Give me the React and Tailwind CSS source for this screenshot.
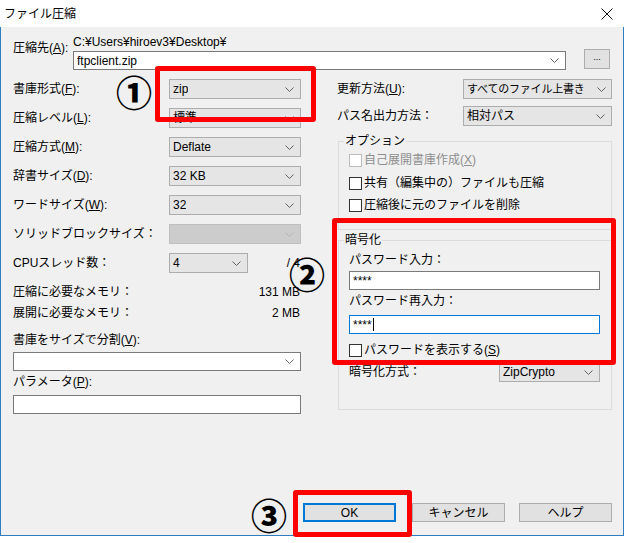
import React from 'react';

const M = ({ children }) => <span className="underline underline-offset-[1px]">{children}</span>;

const Chevron = ({ light }) => (
  <svg width="9" height="5" viewBox="0 0 9 5" className="shrink-0">
    <polyline points="0.5,0.5 4.5,4.5 8.5,0.5" fill="none" stroke={light ? '#b4b4b4' : '#606060'} strokeWidth="1" />
  </svg>
);

const tones = {
  gray: 'bg-[#e5e5e5] border-[#adadad]',
  white: 'bg-white border-[#7a7a7a]',
  off: 'bg-[#cccccc] border-[#bfbfbf]',
};

const Combo = ({ value, className = '', tone = 'gray', textClass = '' }) => (
  <div className={`flex items-center justify-between border pl-[3px] pr-[6px] ${tones[tone]} ${className}`}>
    <span className={`whitespace-nowrap overflow-hidden ${textClass}`}>{value}</span>
    <Chevron light={tone === 'off'} />
  </div>
);

const Check = ({ label, disabled, className = '' }) => (
  <div className={`flex items-center h-[14px] ${disabled ? 'text-[#8e8e8e]' : ''} ${className}`}>
    <span className={`w-[13px] h-[13px] border bg-white mr-[2px] shrink-0 ${disabled ? 'border-[#bcbcbc]' : 'border-[#333333]'}`} />
    <span>{label}</span>
  </div>
);

const Button = ({ children, primary, className = '' }) => (
  <div
    className={`w-[93px] h-[19px] flex items-center justify-center bg-[#e1e1e1] ${
      primary ? 'border-2 border-[#0078d7]' : 'border border-[#adadad]'
    } ${className}`}
  >
    {children}
  </div>
);

const leftRows = [
  { label: <>書庫形式(<M>F</M>):</>, value: 'zip' },
  { label: <>圧縮レベル(<M>L</M>):</>, value: '標準' },
  { label: <>圧縮方式(<M>M</M>):</>, value: 'Deflate' },
  { label: <>辞書サイズ(<M>D</M>):</>, value: '32 KB' },
  { label: <>ワードサイズ(<M>W</M>):</>, value: '32' },
  { label: 'ソリッドブロックサイズ：', value: '', tone: 'off' },
];

const GroupBox = ({ title, className = '', children }) => (
  <div className={`border border-[#dcdcdc] ml-[1px] pl-[10px] pr-[10px] ${className}`}>
    <div className="-mt-[8px] -ml-[5px] w-fit px-[1px] h-[14px] bg-[#f0f0f0]">{title}</div>
    {children}
  </div>
);

export default function App() {
  return (
    <div className="relative w-[626px] h-[543px] bg-white text-black text-[12px] leading-[14px] font-['Liberation_Sans','Noto_Sans_CJK_JP',sans-serif] overflow-hidden">
      <div className="flex flex-col w-[624px] h-[536px]">
        {/* title bar */}
        <div className="h-[27px] flex items-center justify-between pl-[4px] pr-[11px] bg-white shrink-0">
          <span>ファイル圧縮</span>
          <svg width="12" height="12" viewBox="0 0 12 12">
            <path d="M0.5 0.5 L11.5 11.5 M11.5 0.5 L0.5 11.5" stroke="#111" strokeWidth="1" />
          </svg>
        </div>

        <div className="flex-1 flex flex-col bg-[#f0f0f0] border-x border-b border-[#2f7dc1]">
          {/* destination */}
          <div className="flex items-start pl-[12px] pt-[8px]">
            <div className="w-[60px] mt-[6px] h-[14px]">
              圧縮先(<M>A</M>):
            </div>
            <div className="w-[493px]">
              <div className="h-[14px]">C:¥Users¥hiroev3¥Desktop¥</div>
              <Combo value="ftpclient.zip" tone="white" className="mt-[2px] h-[19px]" />
            </div>
            <div className="ml-[18px] mt-[14px] w-[26px] h-[20px] bg-[#e1e1e1] border border-[#adadad] flex items-center justify-center text-[9px] leading-none pb-[3px]">
              ...
            </div>
          </div>

          <div className="flex mt-[9px] pl-[12px]">
            {/* left column */}
            <div className="w-[288px]">
              {leftRows.map((r, i) => (
                <div key={i} className="flex items-center h-[20px] mb-[9px]">
                  <div className="w-[156px]">{r.label}</div>
                  <Combo value={r.value} tone={r.tone} className="w-[132px] h-full" />
                </div>
              ))}
              <div className="flex items-center h-[20px]">
                <div className="w-[156px]">CPUスレッド数：</div>
                <Combo value="4" className="w-[79px] h-full" />
                <div className="ml-auto pr-[1px]">/ 4</div>
              </div>
              <div className="flex items-center justify-between h-[20px] mt-[9px] pr-[1px]">
                <span>圧縮に必要なメモリ：</span>
                <span>131 MB</span>
              </div>
              <div className="flex items-center justify-between h-[20px] mt-[1px] pr-[1px]">
                <span>展開に必要なメモリ：</span>
                <span>2 MB</span>
              </div>
              <div className="mt-[10px] h-[14px]">
                書庫をサイズで分割(<M>V</M>):
              </div>
              <Combo value="" tone="white" className="mt-[5px] h-[19px]" />
              <div className="mt-[4px] h-[14px]">
                パラメータ(<M>P</M>):
              </div>
              <div className="mt-[6px] h-[19px] bg-white border border-[#7a7a7a]" />
            </div>

            {/* right column */}
            <div className="ml-[36px] w-[275px]">
              <div className="flex items-center h-[20px]">
                <div className="w-[126px]">
                  更新方法(<M>U</M>):
                </div>
                <Combo
                  value="すべてのファイル上書き"
                  textClass="text-[11px] tracking-[-0.2px]"
                  className="w-[149px] h-full !pr-[5px]"
                />
              </div>
              <div className="flex items-center h-[20px] mt-[7px]">
                <div className="w-[126px]">パス名出力方法：</div>
                <Combo value="相対パス" className="w-[149px] h-full" />
              </div>

              <GroupBox title="オプション" className="mt-[15px] pb-[17px]">
                <Check disabled className="mt-[5px]" label={<>自己展開書庫作成(<M>X</M>)</>} />
                <Check className="mt-[9px]" label="共有（編集中の）ファイルも圧縮" />
                <Check className="mt-[8px]" label="圧縮後に元のファイルを削除" />
              </GroupBox>

              <GroupBox title="暗号化" className="mt-[10px] pb-[27px]">
                <div className="mt-[6px] h-[14px]">パスワード入力：</div>
                <div className="mt-[4px] h-[19px] w-[251px] bg-white border border-[#7a7a7a] flex items-center pl-[3px]">
                  ****
                </div>
                <div className="mt-[4px] h-[14px]">パスワード再入力：</div>
                <div className="mt-[7px] h-[19px] w-[251px] bg-white border border-[#0078d7] flex items-center pl-[3px]">
                  ****
                  <span className="w-[1px] h-[13px] bg-black ml-[1px]" />
                </div>
                <Check className="mt-[9px]" label={<>パスワードを表示する(<M>S</M>)</>} />
                <div className="flex items-center h-[20px] mt-[5px]">
                  <div className="w-[150px]">暗号化方式：</div>
                  <Combo value="ZipCrypto" className="w-[101px] h-full" />
                </div>
              </GroupBox>
            </div>
          </div>

          {/* buttons */}
          <div className="mt-auto flex justify-end pr-[11px] pb-[13px]">
            <Button primary>OK</Button>
            <Button className="ml-[16px]">キャンセル</Button>
            <Button className="ml-[14px]">ヘルプ</Button>
          </div>
        </div>
      </div>

      {/* annotations */}
      <div className="absolute left-[155px] top-[66px] w-[161px] h-[56px] border-[5px] border-[#ff0000] rounded-[3px]" />
      <div className="absolute left-[332px] top-[218px] w-[284px] h-[147px] border-[5px] border-[#ff0000] rounded-[3px]" />
      <div className="absolute left-[293px] top-[490px] w-[119px] h-[47px] border-[5px] border-[#ff0000] rounded-[3px]" />
      <div className="absolute left-[116px] top-[73px] text-[36px] leading-[36px] font-black font-['Noto_Sans_CJK_JP',sans-serif]">①</div>
      <div className="absolute left-[289px] top-[255px] text-[36px] leading-[36px] font-black font-['Noto_Sans_CJK_JP',sans-serif]">②</div>
      <div className="absolute left-[251px] top-[496px] text-[36px] leading-[36px] font-black font-['Noto_Sans_CJK_JP',sans-serif]">③</div>
    </div>
  );
}
